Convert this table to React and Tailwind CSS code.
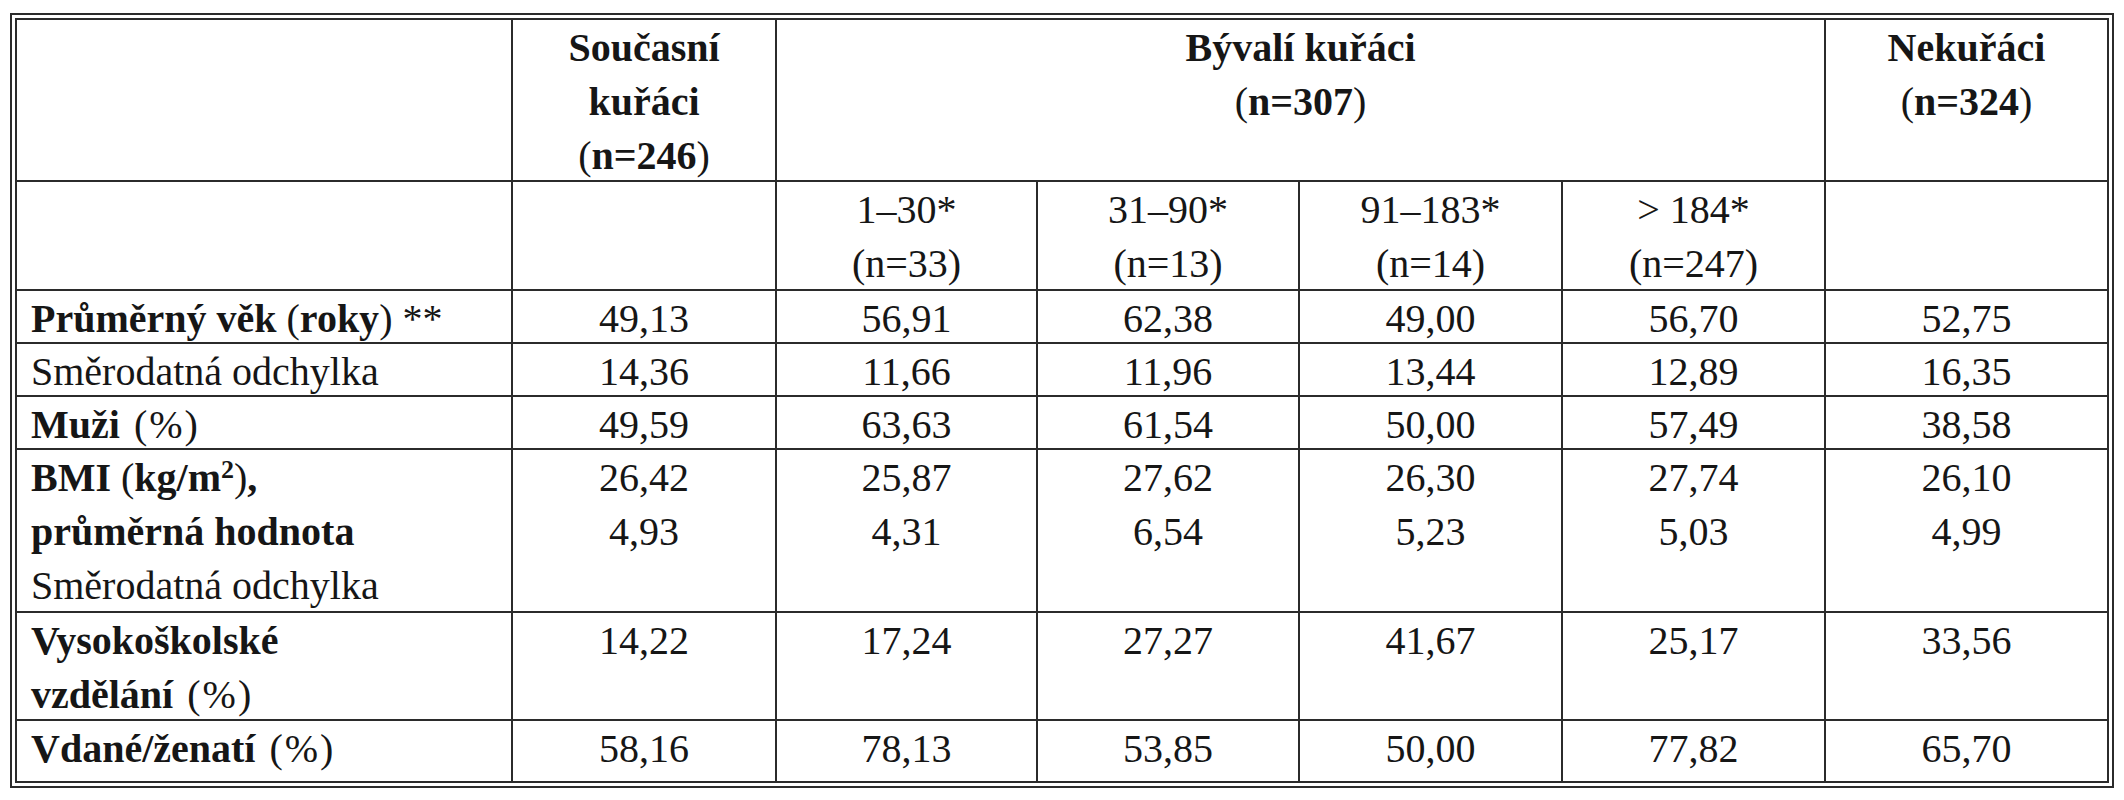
import React from "react";

const cell = "border-r-2 border-b-2 border-[#2b2b2b] pt-[1px] overflow-visible whitespace-nowrap";
const num = cell + " text-center";
const lbl = cell + " pl-[14px]";

const P = ({ children }) => <span className="font-normal">{children}</span>;

const rows = [
  { label: <span className="font-bold">Průměrný věk <P>(</P>roky<P>)</P> <P>**</P></span>, vals: ["49,13", "56,91", "62,38", "49,00", "56,70", "52,75"] },
  { label: <span>Směrodatná odchylka</span>, vals: ["14,36", "11,66", "11,96", "13,44", "12,89", "16,35"] },
  { label: <span className="font-bold">Muži <span className="font-normal tracking-[2px] ml-[4px]">(%)</span></span>, vals: ["49,59", "63,63", "61,54", "50,00", "57,49", "38,58"] },
];

const bmi = [
  ["26,42", "4,93"],
  ["25,87", "4,31"],
  ["27,62", "6,54"],
  ["26,30", "5,23"],
  ["27,74", "5,03"],
  ["26,10", "4,99"],
];

const vys = ["14,22", "17,24", "27,27", "41,67", "25,17", "33,56"];
const vdane = ["58,16", "78,13", "53,85", "50,00", "77,82", "65,70"];

export default function App() {
  return (
    <div className="w-[2124px] h-[800px] bg-white pl-[10px] pt-[13px] font-['Liberation_Serif',serif] text-[40px] leading-[54px] text-[#161616]">
      <div className="w-[2104px] border-2 border-[#2b2b2b] p-[3px]">
        <div className="border-l-2 border-t-2 border-[#2b2b2b] grid grid-cols-[496px_264px_261px_262px_263px_263px_283px] grid-rows-[162px_109px_53px_53px_53px_163px_108px_62px]">
          {/* header row 1 */}
          <div className={cell}></div>
          <div className={num + " font-bold"}>
            <div>Současní</div>
            <div>kuřáci</div>
            <div><P>(</P>n=246<P>)</P></div>
          </div>
          <div className={num + " font-bold col-span-4"}>
            <div>Bývalí kuřáci</div>
            <div><P>(</P>n=307<P>)</P></div>
          </div>
          <div className={num + " font-bold"}>
            <div>Nekuřáci</div>
            <div><P>(</P>n=324<P>)</P></div>
          </div>

          {/* header row 2 */}
          <div className={cell}></div>
          <div className={cell}></div>
          <div className={num}><div>1–30*</div><div>(n=33)</div></div>
          <div className={num}><div>31–90*</div><div>(n=13)</div></div>
          <div className={num}><div>91–183*</div><div>(n=14)</div></div>
          <div className={num}><div>&gt; 184*</div><div>(n=247)</div></div>
          <div className={cell}></div>

          {/* simple rows */}
          {rows.map((r, i) => (
            <React.Fragment key={i}>
              <div className={lbl}>{r.label}</div>
              {r.vals.map((v, j) => (<div key={j} className={num}>{v}</div>))}
            </React.Fragment>
          ))}

          {/* BMI */}
          <div className={lbl}>
            <div className="font-bold">BMI <P>(</P>kg/m<sup className="text-[26px] font-bold">2</sup><P>)</P>,</div>
            <div className="font-bold">průměrná hodnota</div>
            <div>Směrodatná odchylka</div>
          </div>
          {bmi.map((b, j) => (<div key={j} className={num}><div>{b[0]}</div><div>{b[1]}</div></div>))}

          {/* Vysokoškolské */}
          <div className={lbl + " font-bold"}>
            <div>Vysokoškolské</div>
            <div>vzdělání <span className="font-normal tracking-[2px] ml-[4px]">(%)</span></div>
          </div>
          {vys.map((v, j) => (<div key={j} className={num}>{v}</div>))}

          {/* Vdané */}
          <div className={lbl + " font-bold"}>Vdané/ženatí <span className="font-normal tracking-[2px] ml-[4px]">(%)</span></div>
          {vdane.map((v, j) => (<div key={j} className={num}>{v}</div>))}
        </div>
      </div>
    </div>
  );
}
